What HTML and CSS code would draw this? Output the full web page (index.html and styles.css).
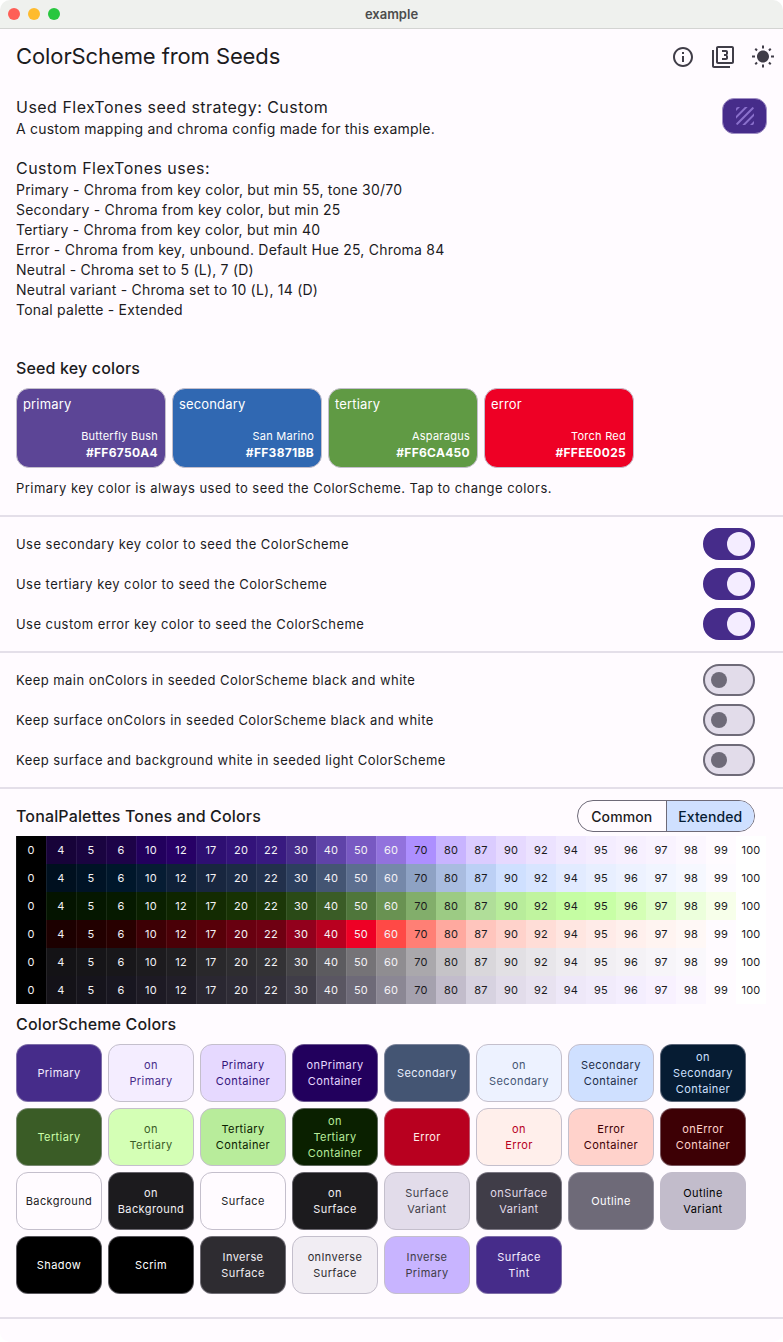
FILE: index.html
```html
<!DOCTYPE html>
<html lang="en">
<head>
    <meta charset="UTF-8">
    <title>example</title>
    <link rel="stylesheet" href="styles.css">
</head>
<body>
<div class="window">
    <div class="titlebar">
        <div class="lights">
            <span class="light red"></span>
            <span class="light yellow"></span>
            <span class="light green"></span>
        </div>
        <div class="titlebar-name">example</div>
    </div>

    <header class="appbar">
        <h1>ColorScheme from Seeds</h1>
        <div class="appbar-icons">
            <svg viewBox="0 0 24 24"><path d="M11 7h2v2h-2zm0 4h2v6h-2zm1-9C6.48 2 2 6.48 2 12s4.48 10 10 10 10-4.48 10-10S17.52 2 12 2zm0 18c-4.41 0-8-3.59-8-8s3.59-8 8-8 8 3.59 8 8-3.59 8-8 8z"/></svg>
            <svg viewBox="0 0 24 24"><path d="M21 1H7c-1.1 0-2 .9-2 2v14c0 1.1.9 2 2 2h14c1.1 0 2-.9 2-2V3c0-1.1-.9-2-2-2zm0 16H7V3h14v14zM3 5H1v16c0 1.1.9 2 2 2h16v-2H3V5zm14 8v-1.5c0-.83-.67-1.5-1.5-1.5.83 0 1.5-.67 1.5-1.5V7c0-1.11-.9-2-2-2h-4v2h4v2h-2v2h2v2h-4v2h4c1.1 0 2-.89 2-2z"/></svg>
            <svg viewBox="0 0 24 24"><path d="M6.76 4.84l-1.8-1.79-1.41 1.41 1.79 1.79 1.42-1.41zM4 10.5H1v2h3v-2zm9-9.95h-2V3.5h2V.55zm7.45 3.91l-1.41-1.41-1.79 1.79 1.41 1.41 1.79-1.79zm-3.21 13.7l1.79 1.8 1.41-1.41-1.8-1.79-1.4 1.4zM20 10.5v2h3v-2h-3zm-8-5c-3.31 0-6 2.69-6 6s2.69 6 6 6 6-2.69 6-6-2.69-6-6-6zm-1 16.95h2V19.5h-2v2.95zm-7.45-3.91l1.41 1.41 1.79-1.8-1.41-1.41-1.79 1.8z"/></svg>
        </div>
    </header>

    <section class="intro">
        <div class="intro-top">
            <div>
                <p class="lead">Used FlexTones seed strategy: Custom</p>
                <p class="line">A custom mapping and chroma config made for this example.</p>
            </div>
            <button class="strategy-btn">
                <svg viewBox="0 0 24 24"><path d="M19.51 3.08L3.08 19.51c.09.34.27.65.51.9.25.24.56.42.9.51L20.93 4.49c-.19-.69-.73-1.23-1.42-1.41zM11.88 3L3 11.88v2.83L14.71 3h-2.83zM5 3c-1.1 0-2 .9-2 2v2l4-4H5zm14 18c.55 0 1.05-.22 1.41-.59.37-.36.59-.86.59-1.41v-2l-4 4h2zm-9.71 0h2.83L21 12.12V9.29L9.29 21z"/></svg>
            </button>
        </div>
        <p class="lead lead-gap">Custom FlexTones uses:</p>
        <p class="line">Primary - Chroma from key color, but min 55, tone 30/70</p>
        <p class="line">Secondary - Chroma from key color, but min 25</p>
        <p class="line">Tertiary - Chroma from key color, but min 40</p>
        <p class="line">Error - Chroma from key, unbound. Default Hue 25, Chroma 84</p>
        <p class="line">Neutral - Chroma set to 5 (L), 7 (D)</p>
        <p class="line">Neutral variant - Chroma set to 10 (L), 14 (D)</p>
        <p class="line">Tonal palette - Extended</p>
    </section>

    <section class="seeds">
        <h2>Seed key colors</h2>
        <div class="seed-row">
            <div class="seed seed-primary">
                <div class="seed-role">primary</div>
                <div class="seed-name">Butterfly Bush</div>
                <div class="seed-hex">#FF6750A4</div>
            </div>
            <div class="seed seed-secondary">
                <div class="seed-role">secondary</div>
                <div class="seed-name">San Marino</div>
                <div class="seed-hex">#FF3871BB</div>
            </div>
            <div class="seed seed-tertiary">
                <div class="seed-role">tertiary</div>
                <div class="seed-name">Asparagus</div>
                <div class="seed-hex">#FF6CA450</div>
            </div>
            <div class="seed seed-error">
                <div class="seed-role">error</div>
                <div class="seed-name">Torch Red</div>
                <div class="seed-hex">#FFEE0025</div>
            </div>
        </div>
        <p class="seed-note">Primary key color is always used to seed the ColorScheme. Tap to change colors.</p>
    </section>

    <hr class="divider">

    <section class="switches">
        <div class="switch-row"><span>Use secondary key color to seed the ColorScheme</span><span class="switch on"></span></div>
        <div class="switch-row"><span>Use tertiary key color to seed the ColorScheme</span><span class="switch on"></span></div>
        <div class="switch-row"><span>Use custom error key color to seed the ColorScheme</span><span class="switch on"></span></div>
    </section>

    <hr class="divider">

    <section class="switches">
        <div class="switch-row"><span>Keep main onColors in seeded ColorScheme black and white</span><span class="switch"></span></div>
        <div class="switch-row"><span>Keep surface onColors in seeded ColorScheme black and white</span><span class="switch"></span></div>
        <div class="switch-row"><span>Keep surface and background white in seeded light ColorScheme</span><span class="switch"></span></div>
    </section>

    <hr class="divider">

    <section class="tones">
        <div class="tones-head">
            <h2>TonalPalettes Tones and Colors</h2>
            <div class="segmented">
                <span class="segment">Common</span>
                <span class="segment selected">Extended</span>
            </div>
        </div>
        <div class="tone-grid" id="toneGrid"></div>
    </section>

    <section class="scheme">
        <h2>ColorScheme Colors</h2>
        <div class="tile-grid">
            <div class="tile dark-tile c-primary">Primary</div>
            <div class="tile c-on-primary">on<br>Primary</div>
            <div class="tile c-primary-container">Primary<br>Container</div>
            <div class="tile dark-tile c-on-primary-container">onPrimary<br>Container</div>
            <div class="tile dark-tile c-secondary">Secondary</div>
            <div class="tile c-on-secondary">on<br>Secondary</div>
            <div class="tile c-secondary-container">Secondary<br>Container</div>
            <div class="tile dark-tile c-on-secondary-container">on<br>Secondary<br>Container</div>

            <div class="tile dark-tile c-tertiary">Tertiary</div>
            <div class="tile c-on-tertiary">on<br>Tertiary</div>
            <div class="tile c-tertiary-container">Tertiary<br>Container</div>
            <div class="tile dark-tile c-on-tertiary-container">on<br>Tertiary<br>Container</div>
            <div class="tile dark-tile c-error">Error</div>
            <div class="tile c-on-error">on<br>Error</div>
            <div class="tile c-error-container">Error<br>Container</div>
            <div class="tile dark-tile c-on-error-container">onError<br>Container</div>

            <div class="tile c-surface">Background</div>
            <div class="tile dark-tile c-on-surface">on<br>Background</div>
            <div class="tile c-surface">Surface</div>
            <div class="tile dark-tile c-on-surface">on<br>Surface</div>
            <div class="tile c-surface-variant">Surface<br>Variant</div>
            <div class="tile dark-tile c-on-surface-variant">onSurface<br>Variant</div>
            <div class="tile dark-tile c-outline">Outline</div>
            <div class="tile c-outline-variant">Outline<br>Variant</div>

            <div class="tile dark-tile c-black">Shadow</div>
            <div class="tile dark-tile c-black">Scrim</div>
            <div class="tile dark-tile c-inverse-surface">Inverse<br>Surface</div>
            <div class="tile c-on-inverse-surface">onInverse<br>Surface</div>
            <div class="tile c-inverse-primary">Inverse<br>Primary</div>
            <div class="tile dark-tile c-primary">Surface<br>Tint</div>
        </div>
    </section>

    <hr class="divider divider-last">
</div>
<script src="palette.js"></script>
</body>
</html>
```

FILE: styles.css
```css
* {
    margin: 0;
    box-sizing: border-box;
}

html {
    background: #fff;
}

body {
    font-family: Inter, "Liberation Sans", sans-serif;
    color: #1c1b1e;
    height: 100vh;
    overflow: hidden;
}

h1, h2 {
    font-weight: 500;
}

.window {
    height: 100%;
    background: #fffbff;
    border-radius: 10px;
    overflow: hidden;
}

/* mac title bar */
.titlebar {
    height: 29px;
    display: flex;
    align-items: center;
    justify-content: center;
    background: #eff1ee;
    border-bottom: 1px solid #d3d4d2;
    position: relative;
}

.lights {
    position: absolute;
    left: 8px;
    top: 8px;
    display: flex;
    gap: 8px;
}

.light {
    width: 12px;
    height: 12px;
    border-radius: 50%;
}

.red { background: #fe5f57; }
.yellow { background: #febb2e; }
.green { background: #28c73f; }

.titlebar-name {
    font-size: 13px;
    font-weight: 600;
    color: #4c4c4c;
}

.appbar {
    height: 54px;
    padding: 0 8px 0 16px;
    display: flex;
    align-items: center;
    justify-content: space-between;
}

.appbar h1 {
    font-size: 22px;
    font-weight: 400;
    letter-spacing: -0.1px;
}

.appbar-icons {
    display: flex;
    gap: 16px;
    margin-top: 1px;
}

.appbar-icons svg {
    width: 24px;
    height: 24px;
    fill: #403d48;
}

/* intro text */
.intro {
    padding: 12px 16px 0;
}

.intro-top {
    display: flex;
    justify-content: space-between;
    align-items: flex-start;
}

.lead {
    font-size: 16px;
    line-height: 24px;
    letter-spacing: 0.48px;
}

.lead-gap {
    margin-top: 17px;
}

.line {
    font-size: 14px;
    line-height: 20px;
    letter-spacing: 0.22px;
}

.strategy-btn {
    width: 45px;
    height: 36px;
    margin-top: 3px;
    background: #462c8a;
    border: 1px solid #a08fc4;
    border-radius: 12px;
    display: flex;
    align-items: center;
    justify-content: center;
    padding: 0;
}

.strategy-btn svg {
    width: 24px;
    height: 24px;
    fill: #8a70cc;
}

/* seed cards */
.seeds {
    padding: 36px 16px 0;
}

h2 {
    font-size: 16px;
    line-height: 24px;
    letter-spacing: 0.15px;
}

.seed-row {
    display: flex;
    gap: 6px;
    margin-top: 8px;
}

.seed {
    width: 150px;
    height: 80px;
    padding: 5px 7px 5px 6px;
    border: 1px solid #c4bfcc;
    border-radius: 13px;
    color: #fff;
    display: flex;
    flex-direction: column;
}

.seed-primary { background: #5c4596; }
.seed-secondary { background: #3068b2; }
.seed-tertiary { background: #609a44; }
.seed-error { background: #ee0025; }

.seed-role {
    font-size: 13px;
    line-height: 20px;
    letter-spacing: 0.15px;
}

.seed-name {
    margin-top: auto;
    font-size: 11px;
    line-height: 16px;
    letter-spacing: 0.25px;
    text-align: right;
}

.seed-hex {
    font-size: 12px;
    line-height: 18px;
    font-weight: 700;
    letter-spacing: 0.3px;
    text-align: right;
}

.seed-note {
    margin-top: 10px;
    font-size: 13px;
    line-height: 20px;
    letter-spacing: 0.45px;
}

/* switches */
.divider {
    height: 2px;
    border: 0;
    background: #e4dfe9;
    margin: 17px 0 7px;
}

.switches + .divider {
    margin-top: 7px;
}

.switch-row {
    height: 40px;
    padding: 0 28px 0 16px;
    display: flex;
    align-items: center;
    justify-content: space-between;
    font-size: 13px;
    letter-spacing: 0.45px;
}

.switch {
    width: 52px;
    height: 32px;
    border-radius: 16px;
    border: 2px solid #6e6a78;
    background: #e2dcea;
    display: flex;
    align-items: center;
    padding-left: 6px;
}

.switch::after {
    content: "";
    width: 16px;
    height: 16px;
    border-radius: 50%;
    background: #6e6a78;
}

.switch.on {
    border-color: #462c8a;
    background: #462c8a;
    justify-content: flex-end;
    padding: 0 2px 0 0;
}

.switch.on::after {
    width: 24px;
    height: 24px;
    background: #f4edff;
}

/* tonal palettes */
.tones {
    padding: 0 16px;
}

.tones-head {
    height: 40px;
    padding: 4px 12px 4px 0;
    display: flex;
    align-items: center;
    justify-content: space-between;
}

.segmented {
    width: 178px;
    height: 32px;
    display: flex;
    border: 1px solid #6e6a78;
    border-radius: 16px;
    overflow: hidden;
    background: #fffbff;
}

.segment {
    flex: 1;
    display: flex;
    align-items: center;
    justify-content: center;
    font-size: 14px;
    font-weight: 500;
    letter-spacing: 0.1px;
}

.segment.selected {
    background: #cfe0ff;
    color: #061c33;
    border-left: 1px solid #6e6a78;
}

.tone-grid {
    display: grid;
    grid-template-columns: repeat(25, 30px);
    grid-auto-rows: 28px;
}

.tone {
    display: flex;
    align-items: center;
    justify-content: center;
    font-size: 11px;
    letter-spacing: 0.2px;
    color: #1c1b1e;
}

.tone.dark {
    color: #f4f2f6;
    box-shadow: inset 1px 0 0 rgba(255, 255, 255, 0.08);
}

/* color scheme tiles */
.scheme {
    padding: 8px 16px 0;
}

.tile-grid {
    display: grid;
    grid-template-columns: repeat(8, 86px);
    grid-auto-rows: 58px;
    gap: 6px;
    margin-top: 8px;
}

.tile {
    display: flex;
    align-items: center;
    justify-content: center;
    text-align: center;
    font-size: 11px;
    line-height: 16px;
    letter-spacing: 0.4px;
    border: 1px solid #c4bfcc;
    border-radius: 12px;
}

.dark-tile {
    border-color: rgba(196, 191, 204, 0.45);
}

.c-primary { background: #462c8a; color: #f4edff; }
.c-on-primary { background: #f4edff; color: #462c8a; }
.c-primary-container { background: #e6d9ff; color: #33137a; }
.c-on-primary-container { background: #22005d; color: #e6d9ff; }
.c-secondary { background: #445573; color: #e8efff; }
.c-on-secondary { background: #edf2ff; color: #445573; }
.c-secondary-container { background: #cfe0ff; color: #1c2b45; }
.c-on-secondary-container { background: #061c33; color: #cfe0ff; }
.c-tertiary { background: #3a5c26; color: #ccffa9; }
.c-on-tertiary { background: #d4ffb5; color: #3a5c26; }
.c-tertiary-container { background: #b8ec9b; color: #0a2000; }
.c-on-tertiary-container { background: #0a2000; color: #b8ec9b; }
.c-error { background: #b8001f; color: #ffebe8; }
.c-on-error { background: #ffefeb; color: #b8001f; }
.c-error-container { background: #ffd2cb; color: #3d0005; }
.c-on-error-container { background: #3d0005; color: #ffd2cb; }
.c-surface { background: #fffbff; color: #1c1b1e; }
.c-on-surface { background: #1c1b1e; color: #f1eff3; }
.c-surface-variant { background: #e2dcea; color: #403d48; }
.c-on-surface-variant { background: #403d48; color: #e2dcea; }
.c-outline { background: #6e6a78; color: #fff; }
.c-outline-variant { background: #c2bccb; color: #000; border-color: #c2bccb; }
.c-black { background: #000; color: #fff; }
.c-inverse-surface { background: #2e2c31; color: #f1eff3; }
.c-on-inverse-surface { background: #f1edf3; color: #2e2c31; }
.c-inverse-primary { background: #c8b4ff; color: #403d48; }

.divider-last {
    margin: 23px 0 0;
}
```

FILE: palette.js
```js
const tones = [0, 4, 5, 6, 10, 12, 17, 20, 22, 30, 40, 50, 60, 70, 80, 87, 90, 92, 94, 95, 96, 97, 98, 99, 100];

const palettes = [
    // primary
    ["#000000", "#170339", "#1a0440", "#1d0348", "#22005d", "#270066", "#2e0f72", "#33137a", "#381a80", "#462c8a", "#5f43a8", "#7859c2", "#9272dd", "#ad8fff", "#c8b4ff", "#dbccff", "#e6d9ff", "#ece2ff", "#f1e9ff", "#f4edff", "#f7f0ff", "#f9f3ff", "#fcf7ff", "#fffbff", "#ffffff"],
    // secondary
    ["#000000", "#00101f", "#001325", "#00172b", "#061c33", "#0f2038", "#18263f", "#1c2b45", "#22304b", "#2d3f5e", "#445573", "#5c6e8f", "#7588a9", "#8ea2c4", "#a9bce0", "#bcd0f5", "#cfe0ff", "#d8e5ff", "#e2ebff", "#e8efff", "#edf2ff", "#f1f5ff", "#f6f8ff", "#fdfbff", "#ffffff"],
    // tertiary
    ["#000000", "#041400", "#051700", "#061a00", "#0a2000", "#0e2500", "#132b02", "#173204", "#1c3708", "#2a4a17", "#3a5c26", "#4f763b", "#699252", "#82ae6b", "#9ccb84", "#b0de99", "#b8ec9b", "#c0f49f", "#c5fda3", "#c8ffa6", "#d4ffb5", "#dfffc8", "#ecffdc", "#f7ffea", "#ffffff"],
    // error
    ["#000000", "#1c0000", "#220000", "#280000", "#3d0005", "#4a0007", "#570009", "#680010", "#6f0012", "#92001c", "#b8001f", "#ee0025", "#ff4946", "#ff7f75", "#ffa99f", "#ffc5bd", "#ffd2cb", "#ffddd7", "#ffe6e1", "#ffebe8", "#fff0ed", "#fff4f1", "#fff8f6", "#fffbff", "#ffffff"],
    // neutral
    ["#000000", "#141316", "#161518", "#18171a", "#1c1b1e", "#201f22", "#29282b", "#2e2d30", "#333235", "#444346", "#5c5b5f", "#757377", "#8f8d91", "#aaa8ac", "#c5c3c7", "#d9d7db", "#e2e0e4", "#e8e6ea", "#eeecf0", "#f1eff3", "#f4f2f6", "#f7f5f9", "#faf8fc", "#fffbff", "#ffffff"],
    // neutral variant
    ["#000000", "#141218", "#16141c", "#181620", "#1d1a24", "#211e28", "#2a2731", "#2e2b35", "#33303a", "#403d48", "#5a5662", "#6e6a78", "#8b8794", "#a5a1ae", "#c2bccb", "#d7d2e0", "#e2dcea", "#e8e2f0", "#eee8f8", "#f1ebfb", "#f4eefe", "#f8f1ff", "#fbf6ff", "#fffbff", "#ffffff"]
];

const toneGrid = document.getElementById("toneGrid");

palettes.forEach(function (palette) {
    palette.forEach(function (color, i) {
        const cell = document.createElement("div");
        cell.className = tones[i] <= 60 ? "tone dark" : "tone";
        cell.style.background = color;
        cell.textContent = tones[i];
        toneGrid.appendChild(cell);
    });
});
```
